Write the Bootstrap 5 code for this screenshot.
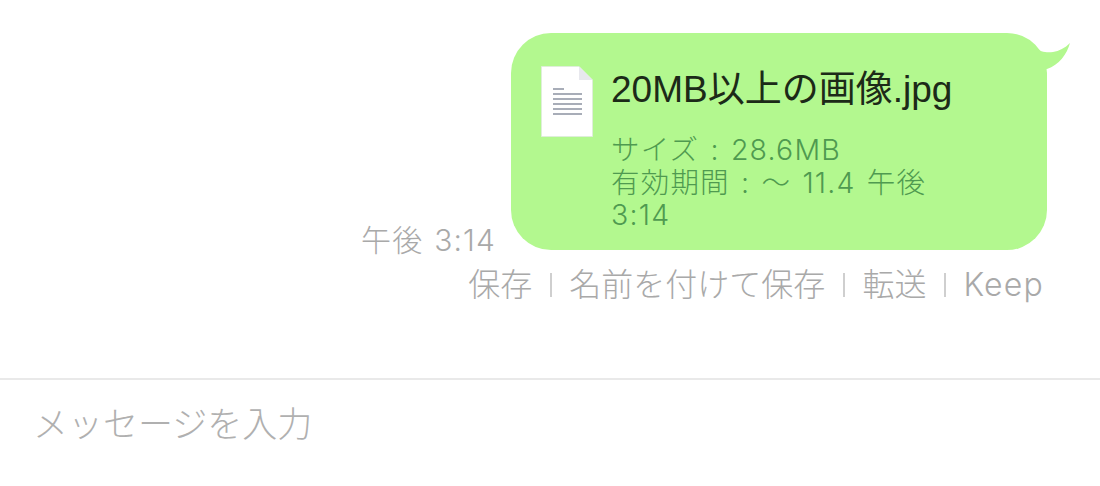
<!DOCTYPE html>
<html lang="ja">
<head>
<meta charset="utf-8">
<title>LINE</title>
<link href="https://cdn.jsdelivr.net/npm/bootstrap@5.3.0/dist/css/bootstrap.min.css" rel="stylesheet">
<style>
html,body{height:486px;overflow:hidden;background:#fff;}
body{font-family:"Inter","Noto Sans CJK JP",sans-serif;font-weight:300;}
.chat-zone{height:378px;padding-top:33px;padding-right:53px;}
.msg-time{font-size:30px;line-height:32px;letter-spacing:1.1px;word-spacing:1.500px;color:#a9a9a9;margin-right:15px;margin-bottom:-6px;}
.bubble{width:536px;height:217px;background:#b3f88f;border-radius:40px;padding:33px 30px 0;position:relative;}
.tail{position:absolute;left:524px;top:6px;width:38px;height:36px;}
.file-ico{width:52px;height:71px;flex:none;margin-right:18px;}
.file-name{font-family:"Liberation Sans","Noto Sans CJK JP",sans-serif;font-weight:400;font-size:37px;line-height:44px;color:#1c2a18;margin-top:2px;white-space:nowrap;}
.file-meta{font-size:28.5px;line-height:32.500px;letter-spacing:1.2px;word-spacing:2px;color:#4f9a50;margin-top:22px;width:345px;}
.act-row{font-size:32px;line-height:40px;color:#a9a9a9;margin-top:15px;margin-right:3px;}
.act-latin{letter-spacing:1.2px;}
.act-sep{display:inline-block;width:2px;height:24px;background:#cfcfcf;margin:0 17.500px;vertical-align:-1px;}
.compose{border-top:2px solid #e9e9e9;padding:22px 33px 0;font-size:35px;line-height:44px;color:#b0b0b0;}
</style>
</head>
<body>
<div class="chat-zone">
  <div class="d-flex justify-content-end align-items-end">
    <div class="msg-time">午後 3:14</div>
    <div class="bubble">
      <svg class="tail" viewBox="0 0 38 36"><path d="M0 8C5 13 12 14 18 13C24 12 30 9 35 4C32 15 24 26 12 30L0 30Z" fill="#b3f88f"/></svg>
      <div class="d-flex">
        <svg class="file-ico" viewBox="0 0 52 71">
          <path d="M.5 .5H38L51.500 14V70.500H.5Z" fill="#fff" stroke="#dfeeda"/>
          <path d="M38 .5L51.500 14H38Z" fill="#e8e8ee"/>
          <path d="M12 23H23M12 28H41M12 33H41M12 38H41M12 43H41M12 48H41" stroke="#a8adb8" stroke-width="2.200"/>
        </svg>
        <div>
          <div class="file-name">20MB以上の画像.jpg</div>
          <div class="file-meta">サイズ : 28.6MB<br>有効期間 : ～ 11.4 午後<br>3:14</div>
        </div>
      </div>
    </div>
  </div>
  <div class="act-row d-flex justify-content-end align-items-center">
    <span>保存</span><span class="act-sep"></span><span>名前を付けて保存</span><span class="act-sep"></span><span>転送</span><span class="act-sep"></span><span class="act-latin">Keep</span>
  </div>
</div>
<div class="compose">メッセージを入力</div>
<script src="https://cdn.jsdelivr.net/npm/bootstrap@5.3.0/dist/js/bootstrap.bundle.min.js"></script>
</body>
</html>
